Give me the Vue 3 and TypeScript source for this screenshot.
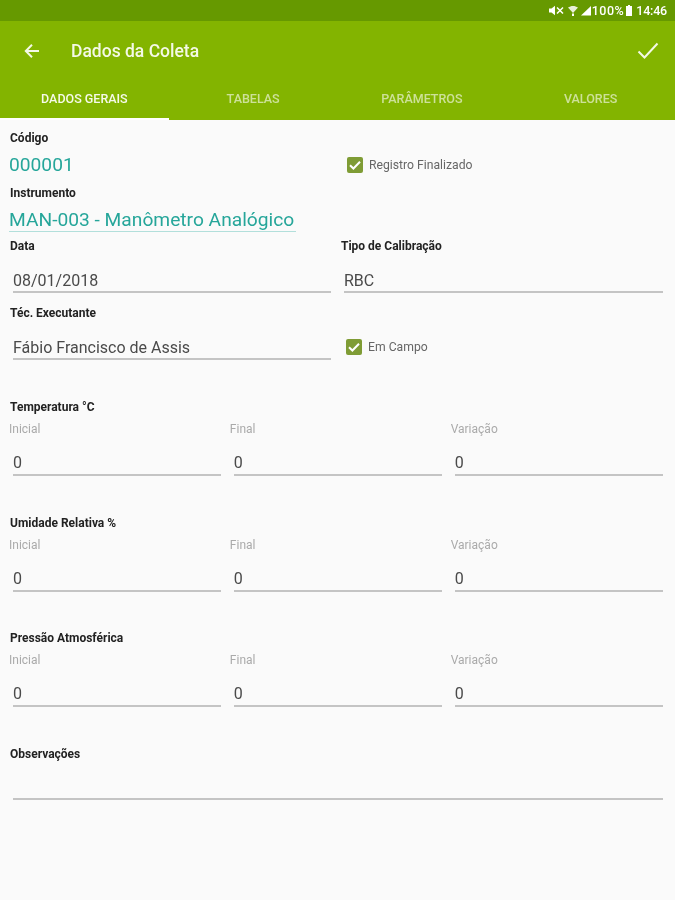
<script setup lang="ts">
interface Group {
  title: string;
  values: { name: string; value: string }[];
}

const tabs = ['Dados Gerais', 'Tabelas', 'Parâmetros', 'Valores'];

const groups: Group[] = ['Temperatura °C', 'Umidade Relativa %', 'Pressão Atmosférica'].map((title) => ({
  title,
  values: [
    { name: 'Inicial', value: '0' },
    { name: 'Final', value: '0' },
    { name: 'Variação', value: '0' },
  ],
}));
</script>

<template>
  <div class="screen">
    <div class="status">
      <svg class="st-mute" width="15" height="11" viewBox="0 0 15 11">
        <path d="M0 3.500h2.500L6 .8v9.400L2.500 7.500H0z" fill="#fff" />
        <path d="M8 2.500l6 6M14 2.500L8 8.500" stroke="#fff" stroke-width="1.500" />
      </svg>
      <svg class="st-wifi" width="10" height="11" viewBox="0 0 10 11">
        <path d="M0 2.500C3 .4 7 .4 10 2.500L5 8z" fill="#fff" opacity=".85" />
        <rect x="4" y="8.500" width="2" height="2.500" fill="#fff" />
      </svg>
      <svg class="st-signal" width="11" height="11" viewBox="0 0 11 11">
        <path d="M11 1v9.500H1z" fill="#fff" />
      </svg>
      <span class="st-text st-level">100%</span>
      <svg class="st-batt" width="6" height="11" viewBox="0 0 6 11">
        <path d="M2 0h2v1h2v10H0V1h2z" fill="#fff" />
      </svg>
      <span class="st-text">14:46</span>
    </div>

    <header class="appbar">
      <div class="toolbar">
        <svg class="back" width="16" height="16" viewBox="0 0 16 16">
          <path d="M15 8H2M8 1.800L1.800 8 8 14.200" fill="none" stroke="#f4f9e6" stroke-width="2" />
        </svg>
        <span class="title">Dados da Coleta</span>
        <svg class="done" width="22" height="18" viewBox="0 0 22 18">
          <path d="M1.500 9.500L7.500 15.500 20.500 1.500" fill="none" stroke="#f4f9e6" stroke-width="2" />
        </svg>
      </div>
      <nav class="tabs">
        <div v-for="(tab, i) in tabs" :key="tab" class="tab" :class="{ active: i === 0 }">{{ tab }}</div>
      </nav>
    </header>

    <main class="form">
      <div class="label first">Código</div>
      <div class="code-row">
        <div class="link code">000001</div>
        <label class="check code-check">
          <svg width="16" height="16" viewBox="0 0 16 16">
            <rect width="16" height="16" rx="2" fill="#7f9c35" />
            <path d="M3 8.200l3.400 3.300L13 4.800" fill="none" stroke="#fff" stroke-width="2" />
          </svg>
          Registro Finalizado
        </label>
      </div>
      <div class="label instrument">Instrumento</div>
      <div class="link instrument-value">MAN-003 - Manômetro Analógico</div>

      <div class="two">
        <div>
          <div class="label">Data</div>
          <div class="input">08/01/2018</div>
        </div>
        <div class="col-right">
          <div class="label">Tipo de Calibração</div>
          <div class="input">RBC</div>
        </div>
      </div>

      <div class="two tech">
        <div>
          <div class="label">Téc. Executante</div>
          <div class="input">Fábio Francisco de Assis</div>
        </div>
        <label class="check field-check">
          <svg width="16" height="16" viewBox="0 0 16 16">
            <rect width="16" height="16" rx="2" fill="#7f9c35" />
            <path d="M3 8.200l3.400 3.300L13 4.800" fill="none" stroke="#fff" stroke-width="2" />
          </svg>
          Em Campo
        </label>
      </div>

      <section v-for="group in groups" :key="group.title" class="group">
        <div class="label">{{ group.title }}</div>
        <div class="three">
          <div v-for="item in group.values" :key="item.name" class="cell">
            <div class="hint">{{ item.name }}</div>
            <div class="input small">{{ item.value }}</div>
          </div>
        </div>
      </section>

      <section class="notes">
        <div class="label">Observações</div>
        <div class="notes-line"></div>
      </section>
    </main>
  </div>
</template>

<style scoped>
.screen {
  width: 675px;
  height: 900px;
  overflow: hidden;
  background: #fafafa;
  font-family: Roboto, sans-serif;
  color: #444;
  filter: blur(0.4px);
}

.status {
  height: 21px;
  background: #669900;
  display: flex;
  align-items: center;
  justify-content: flex-end;
  padding-right: 8px;
  box-sizing: border-box;
  color: #fff;
}

.st-mute {
  margin-right: 4px;
}

.st-wifi {
  margin-right: 2px;
}

.st-signal {
  margin-right: 1px;
}

.st-text {
  font-size: 12.500px;
  font-weight: 500;
  letter-spacing: -0.2px;
}

.st-level {
  letter-spacing: 0.5px;
}

.st-batt {
  margin: 0 4px 0 2px;
}

.appbar {
  height: 99px;
  background: #83b400;
  display: flex;
  flex-direction: column;
}

.toolbar {
  height: 57px;
  box-sizing: border-box;
  display: flex;
  align-items: center;
  padding: 2px 16px 0 24px;
}

.back {
  margin-right: 31px;
}

.title {
  flex: 1;
  color: #f4f9e6;
  font-size: 17.500px;
  font-weight: 500;
}

.tabs {
  flex: 1;
  display: grid;
  grid-template-columns: repeat(4, 1fr);
}

.tab {
  text-align: center;
  text-transform: uppercase;
  font-size: 12.500px;
  font-weight: 500;
  color: rgba(255, 255, 255, 0.6);
  line-height: 42px;
  height: 42px;
  box-sizing: border-box;
}

.tab.active {
  color: #f6fae9;
  border-bottom: 2px solid #fff;
}

.form {
  padding: 0 12px 0 9px;
}

.label {
  font-size: 12px;
  font-weight: 700;
  color: #222;
  line-height: 12px;
  padding: 0 0 2px 1px;
}

.first {
  padding-top: 12px;
}

.code-row {
  display: flex;
  margin-top: 5px;
  height: 26px;
  align-items: center;
}

.link {
  color: #26a69a;
  font-size: 19.200px;
}

.code {
  width: 338px;
}

.check {
  display: flex;
  align-items: center;
  gap: 6px;
  font-size: 12.200px;
  color: #666;
}

.code-check {
  margin-top: 2px;
}

.instrument {
  margin-top: 10px;
}

.instrument-value {
  width: 287px;
  line-height: 26px;
  margin-top: 6px;
  border-bottom: 1px solid #b2dfdb;
  height: 24px;
  white-space: nowrap;
}

.two {
  display: grid;
  grid-template-columns: 322px 1fr;
  gap: 9px;
}

.two:not(.tech) {
  margin-top: 8px;
}

.tech {
  margin-top: 14px;
}

.input {
  margin: 14px 0 0 4px;
  height: 23px;
  line-height: 25px;
  font-size: 16px;
  color: #4a4a4a;
  border-bottom: 2px solid #c4c4c4;
}

.field-check {
  align-self: end;
  padding: 0 0 5px 6px;
}

.group {
  padding-top: 41px;
  height: 74.500px;
}

.three {
  display: grid;
  grid-template-columns: repeat(3, 1fr);
  gap: 8.500px;
  margin-top: 8px;
}

.hint {
  font-size: 12px;
  color: #aaa;
  line-height: 12px;
  padding-bottom: 2px;
}

.input.small {
  margin-top: 14px;
  line-height: 23px;
}

.notes {
  padding-top: 41px;
}

.notes-line {
  margin: 36px 0 0 4px;
  border-bottom: 2px solid #c4c4c4;
}
</style>

<style>
html,
body {
  background: #fafafa;
}
</style>
